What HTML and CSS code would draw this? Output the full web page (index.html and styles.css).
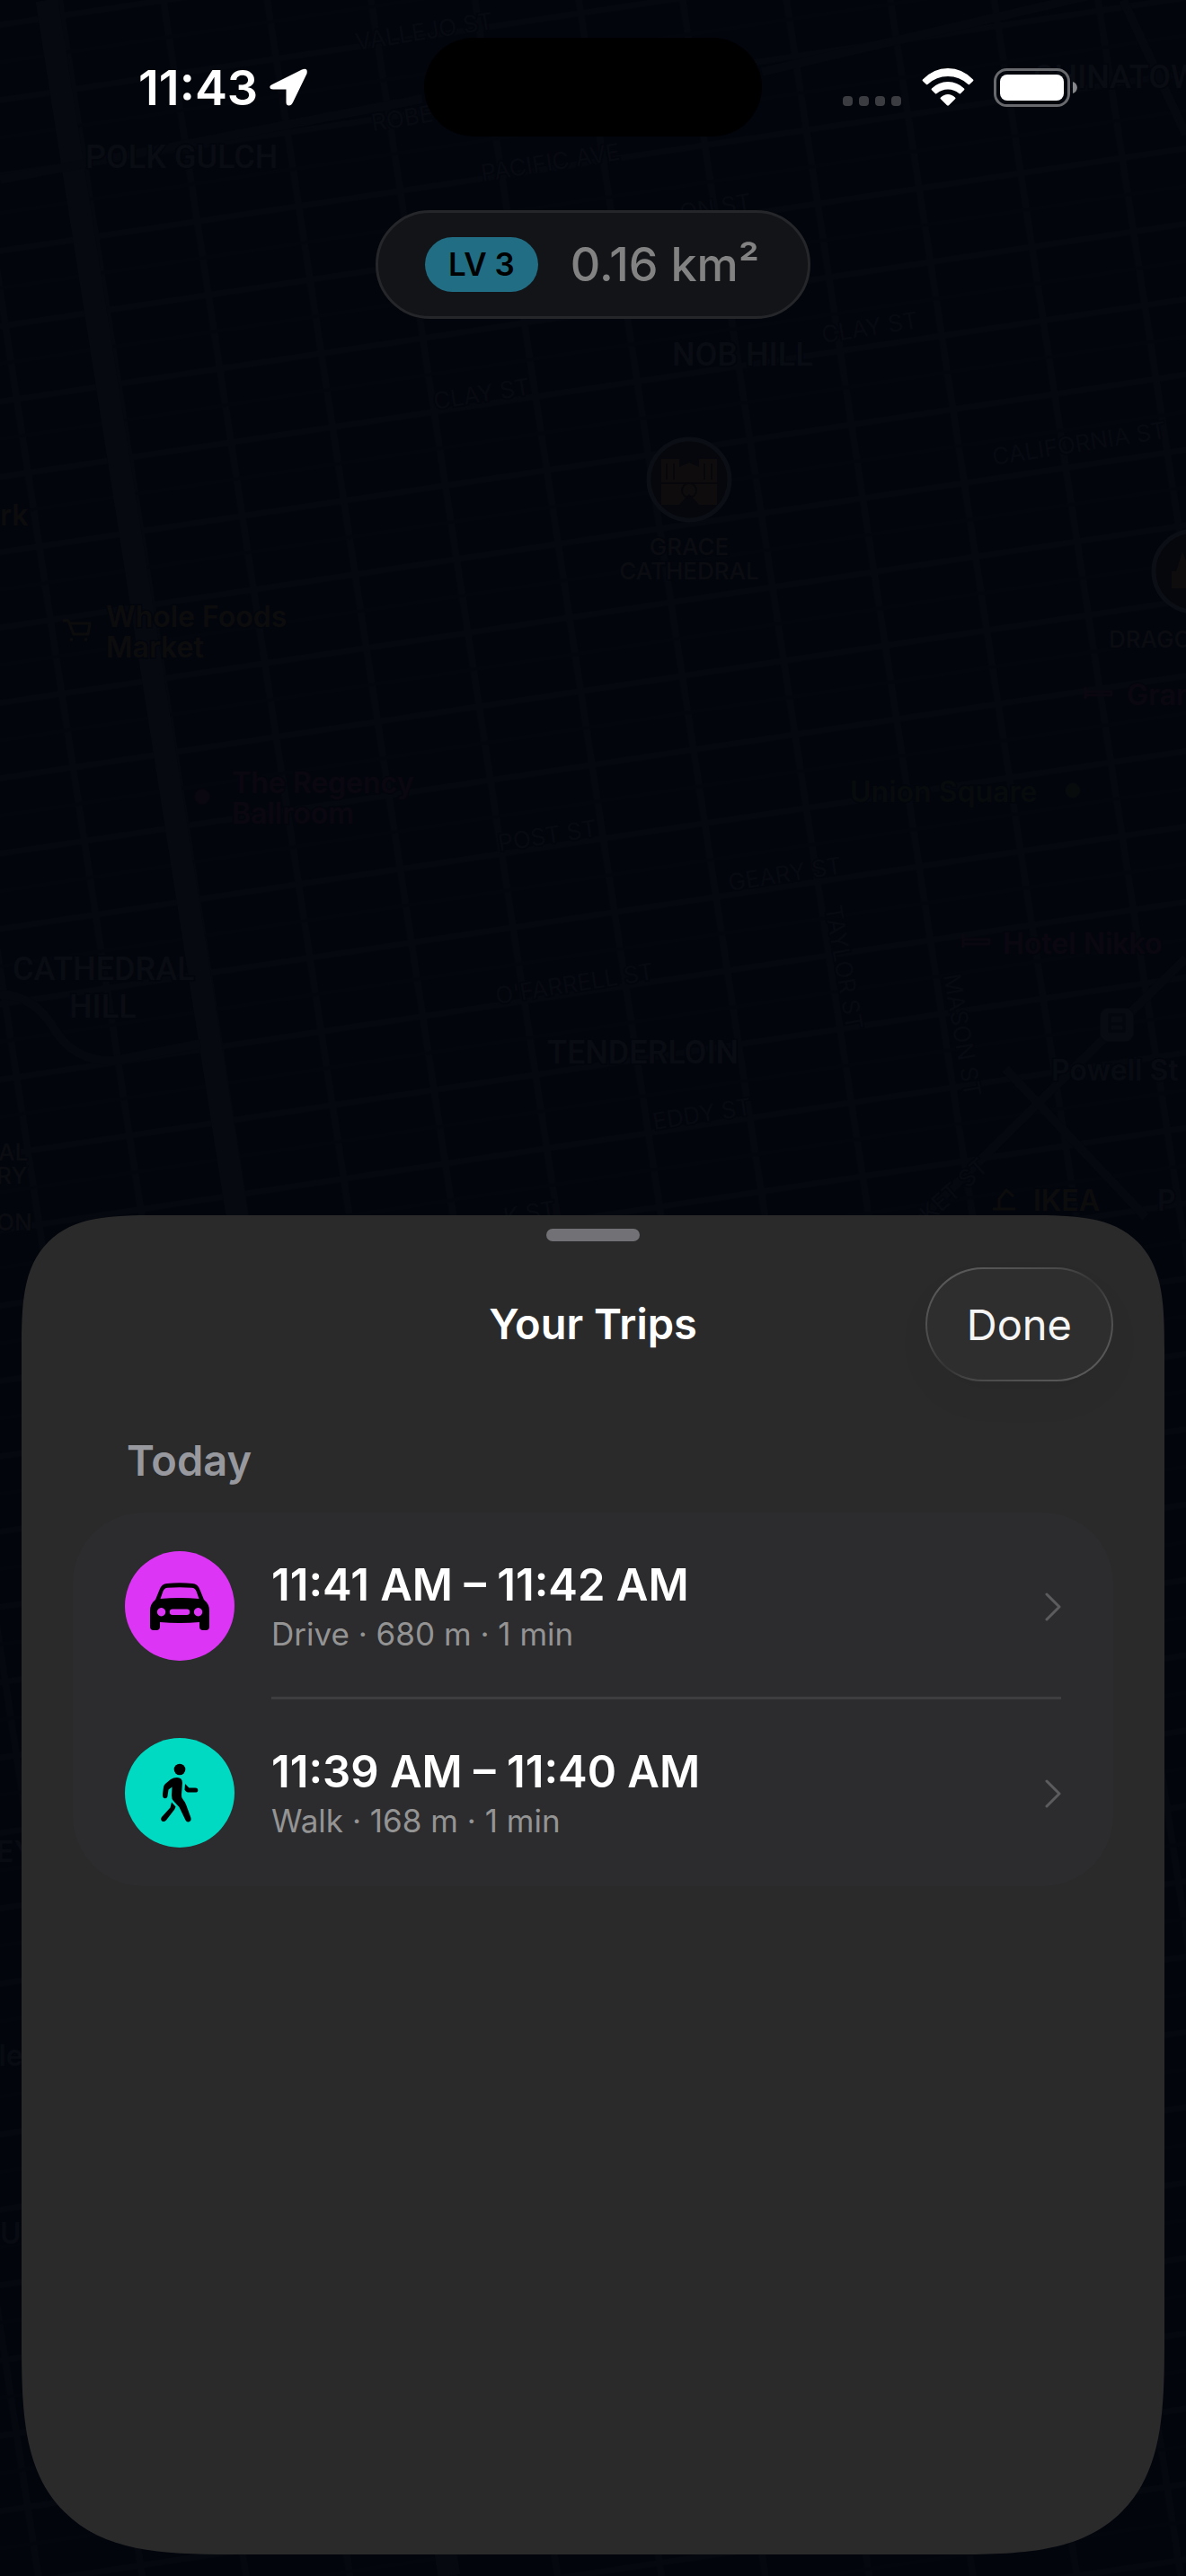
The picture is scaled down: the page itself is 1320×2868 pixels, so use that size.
FILE: index.html
```
<!DOCTYPE html>
<html lang="en">
<head>
    <meta charset="utf-8">
    <meta name="viewport" content="width=device-width, initial-scale=1">
    <title>Your Trips</title>
    <link rel="stylesheet" href="styles.css">
</head>
<body>
    <div class="screen">
        <svg class="map" viewBox="0 0 1320 2868" preserveAspectRatio="xMidYMin slice" aria-hidden="true">
            <defs>
                <pattern id="blocks" width="113" height="82" patternUnits="userSpaceOnUse" patternTransform="matrix(1 -0.15 0.153 1 239 408)">
                    <path class="street" d="M0 3H113M5 0V82"/>
                    <path class="alley" d="M0 44H113"/>
                </pattern>
            </defs>
            <rect width="1320" height="2868" fill="url(#blocks)"/>
            <path class="avenue" d="M52 0L265 1360L500 2868"/>
            <path class="road" d="M0 1107Q38 1108 60 1145T126 1181L223 1162M1022 1360L1182 1202L1320 1067M1119 1190L1275 1355M1250 0L1320 150M0 200L470 110M848 80L1320 -30"/>

            <g class="district">
                <text x="95" y="187">POLK GULCH</text>
                <text x="1150" y="98">CHINATOWN</text>
                <text x="748" y="407">NOB HILL</text>
                <text x="14" y="1091">CATHEDRAL</text>
                <text x="77" y="1133">HILL</text>
                <text x="609" y="1184">TENDERLOIN</text>
            </g>
            <g class="street-name">
                <text transform="translate(397 56) rotate(-9)">VALLEJO ST</text>
                <text transform="translate(415 146) rotate(-9)">ROBERT C</text>
                <text transform="translate(537 202) rotate(-9)">PACIFIC AVE</text>
                <text transform="translate(758 246) rotate(-9)">ON ST</text>
                <text transform="translate(916 382) rotate(-9)">CLAY ST</text>
                <text transform="translate(484 456) rotate(-9)">CLAY ST</text>
                <text transform="translate(1106 518) rotate(-9)">CALIFORNIA ST</text>
                <text transform="translate(556 948) rotate(-9)">POST ST</text>
                <text transform="translate(812 992) rotate(-9)">GEARY ST</text>
                <text transform="translate(553 1118) rotate(-9)">O'FARRELL ST</text>
                <text transform="translate(728 1258) rotate(-9)">EDDY ST</text>
                <text transform="translate(562 1364) rotate(-9)">K ST</text>
                <text transform="translate(918 1010) rotate(80)">TAYLOR ST</text>
                <text transform="translate(1050 1086) rotate(80)">MASON ST</text>
                <text transform="translate(1034 1362) rotate(-42)">KET ST</text>
            </g>
            <g class="landmark">
                <circle cx="767" cy="534" r="45"/>
                <path class="cathedral" d="M736 562V511H756V520L767 515L778 520V511H798V562H778L767 550L756 562Z"/>
                <path class="cathedral-detail" d="M742 516V534M750 516V534M784 516V534M792 516V534M734 538H800"/>
                <circle class="cathedral-detail" cx="767" cy="546" r="8"/>
                <text x="767" y="618" text-anchor="middle">GRACE</text>
                <text x="767" y="645" text-anchor="middle">CATHEDRAL</text>
                <circle cx="1329" cy="636" r="45"/>
                <path class="cathedral" d="M1304 655V636H1309L1316 614L1320 624V655Z"/>
                <text x="1234" y="721">DRAGON'S GATE</text>
                <text x="-2" y="1292">AL</text>
                <text x="-4" y="1318">RY</text>
                <text x="-4" y="1370">ON</text>
            </g>
            <g class="place shop">
                <text x="0" y="585">rk</text>
                <text x="118" y="698">Whole Foods</text>
                <text x="118" y="732">Market</text>
                <text x="1150" y="1348">IKEA</text>
                <path d="M70 691H76L82 706H98L100 694H77M78 712h3M94 712h3"/>
                <path d="M1105 1346H1130M1112 1346V1335L1120 1325L1128 1332"/>
            </g>
            <g class="place venue">
                <text x="258" y="883">The Regency</text>
                <text x="258" y="917">Ballroom</text>
                <circle cx="225" cy="887" r="8"/>
                <text x="1254" y="785">Grant Plaza</text>
                <text x="1116" y="1062">Hotel Nikko</text>
                <path d="M1208 765V778M1208 774H1237V770H1208M1072 1040V1055M1072 1051H1101V1046H1072"/>
            </g>
            <g class="place park">
                <text x="946" y="893">Union Square</text>
                <circle cx="1194" cy="880" r="8"/>
            </g>
            <g class="place transit">
                <text x="1170" y="1203">Powell St</text>
                <rect x="1224" y="1122" width="38" height="38" rx="10"/>
                <path d="M1235 1130H1251V1148H1235ZM1235 1140H1251"/>
                <text x="1288" y="1348">P</text>
                <text x="-4" y="2073">EY</text>
                <text x="-20" y="2300">ale</text>
                <text x="0" y="2498">U</text>
            </g>
        </svg>

        <header class="status-bar">
            <div class="status-left">
                <time>11:43</time>
                <svg class="location" viewBox="0 0 42 42" aria-label="Location in use">
                    <path d="M3 18L36 1.500Q43-1 41.500 6L26 38Q24 42 21 41.500Q18.500 41 18.500 38V23.500H4Q.5 23.500 .3 21Q.2 19 3 18Z"/>
                </svg>
            </div>
            <div class="island"></div>
            <div class="status-right">
                <svg class="signal" viewBox="0 0 66 42" aria-label="No signal">
                    <rect x="0" y="31" width="11" height="11" rx="4"/>
                    <rect x="18" y="31" width="11" height="11" rx="4"/>
                    <rect x="36" y="31" width="11" height="11" rx="4"/>
                    <rect x="54" y="31" width="11" height="11" rx="4"/>
                </svg>
                <svg class="wifi" viewBox="0 0 58 42" aria-label="Wi-Fi">
                    <path d="M1 12.500Q13 0 29 0T57 12.500Q58 13.300 57 14.200L53 18Q52.200 18.600 51.300 17.800Q42 9 29 9T6.700 17.800Q5.800 18.600 5 18L1 14.200Q0 13.300 1 12.500Z"/>
                    <path d="M11 22.500Q18.500 15 29 15T47 22.500Q48 23.300 47 24.200L43 28.200Q42.200 28.800 41.300 28Q36 23.500 29 23.500T16.700 28Q15.800 28.800 15 28.200L11 24.200Q10 23.300 11 22.500Z"/>
                    <path d="M21 32.500Q24.500 29 29 29T37 32.500Q38 33.300 37 34.200L30 41.300Q29 42.200 28 41.300L21 34.200Q20 33.300 21 32.500Z"/>
                </svg>
                <svg class="battery" viewBox="0 0 93 43" aria-label="Battery full">
                    <rect class="battery-shell" x="1.500" y="1.500" width="82" height="40" rx="13"/>
                    <rect class="battery-level" x="7" y="7" width="71" height="29" rx="8"/>
                    <path class="battery-cap" d="M88 15C94.500 17 94.500 26 88 28Z"/>
                </svg>
            </div>
        </header>

        <div class="score">
            <span class="level">LV 3</span>
            <span class="area">0.16 km²</span>
        </div>

        <main class="sheet">
            <div class="grabber"></div>
            <div class="sheet-header">
                <h1>Your Trips</h1>
                <button class="done" type="button">Done</button>
            </div>

            <section class="day">
                <h2>Today</h2>
                <ul class="trips">
                    <li>
                        <a class="trip" href="#drive">
                            <span class="trip-icon drive">
                                <svg viewBox="0 0 122 122" aria-hidden="true">
                                    <path fill-rule="evenodd" d="M34 54L38.500 43Q41 36 47 36Q61 34.500 75 36Q81 36 83.500 43L88 54Q94 59 94 66V84Q94 88 90 88H87Q83 88 83 84V79Q61 81 39 79V84Q39 88 35 88H32Q28 88 28 84V66Q28 59 34 54ZM39.500 53Q61 51 82.500 53L79.500 44.500Q78 41 74.500 40.800Q61 39.500 47.500 40.800Q44 41 42.500 44.500ZM40.500 63a4.700 4.700 0 1 0 .1 0ZM81.500 63a4.700 4.700 0 1 0 .1 0ZM53 64.500a3.200 3.200 0 0 0 0 6.400H69a3.200 3.200 0 0 0 0-6.400Z"/>
                                </svg>
                            </span>
                            <span class="trip-body">
                                <span class="trip-text">
                                    <span class="trip-time">11:41 AM – 11:42 AM</span>
                                    <span class="trip-info">Drive · 680 m · 1 min</span>
                                </span>
                                <svg class="chevron" viewBox="0 0 18 32" aria-hidden="true"><path d="M2 2L16 16L2 30"/></svg>
                            </span>
                        </a>
                    </li>
                    <li>
                        <a class="trip" href="#walk">
                            <span class="trip-icon walk">
                                <svg viewBox="0 0 122 122" aria-hidden="true">
                                    <circle cx="61" cy="35" r="6.300"/>
                                    <path d="M42 62L43 55Q43 53 45 51L51 46Q54 44 58 44Q64 44 64 50L63 63Q62.500 66 65 69Q67 71 68 74L73.300 88.500Q74.500 92 71.500 93.200Q68.800 94 67.500 91.500L60.500 77L54 70Q52 68 52 64L52.500 54.500L48.500 57.500L47.500 64.500Q47.200 67.300 44.700 67.300Q42 67 42 64Z"/>
                                    <path d="M67 51L71.500 55.500H78.500Q81.300 55.700 81.300 58.200Q81.300 60.500 78.500 60.600H70.500Q69 60.600 68 59.500L66.500 57.700Z"/>
                                    <path d="M52 71.500L56.500 76.500Q56 78.500 54.500 80.500L45.800 91.800Q43.500 94 41.300 92.500Q39.200 90.500 41 88L50.500 77.500Z"/>
                                </svg>
                            </span>
                            <span class="trip-body">
                                <span class="trip-text">
                                    <span class="trip-time">11:39 AM – 11:40 AM</span>
                                    <span class="trip-info">Walk · 168 m · 1 min</span>
                                </span>
                                <svg class="chevron" viewBox="0 0 18 32" aria-hidden="true"><path d="M2 2L16 16L2 30"/></svg>
                            </span>
                        </a>
                    </li>
                </ul>
            </section>
        </main>
    </div>
</body>
</html>
```
FILE: styles.css
```
* {
    box-sizing: border-box;
}

body {
    margin: 0;
    background-color: #03050d;
    color: white;
    font-family: Inter, "Liberation Sans", sans-serif;
}

h1, h2, ul {
    margin: 0;
    padding: 0;
}

.screen {
    position: relative;
    display: flex;
    flex-direction: column;
    min-height: 100vh;
    overflow: hidden;
}

/* dimmed map behind everything */
.map {
    position: absolute;
    top: 0;
    left: 0;
    width: 100%;
    height: 100%;
}

.map path, .map circle, .map rect {
    stroke-linejoin: round;
}

.map .street {
    fill: none;
    stroke: #05080f;
    stroke-width: 7;
}

.map .alley {
    fill: none;
    stroke: #04060e;
    stroke-width: 4;
}

.map .avenue {
    fill: none;
    stroke: #060910;
    stroke-width: 25;
}

.map .road {
    fill: none;
    stroke: #05080f;
    stroke-width: 10;
}

.map text {
    paint-order: stroke;
    stroke: #03050d;
    stroke-width: 3px;
}

.district {
    fill: #090c12;
    font: 500 36px Roboto, "Liberation Sans", sans-serif;
}

.street-name {
    fill: #070a11;
    font-size: 26px;
}

.landmark {
    fill: #0a0c11;
    font-size: 26px;
    font-weight: 500;
}

.landmark circle {
    fill: #06070c;
    stroke: #0b0e14;
    stroke-width: 5;
}

.landmark .cathedral {
    fill: #0e0c0d;
}

.landmark .cathedral-detail {
    fill: none;
    stroke: #07070b;
    stroke-width: 2;
}

.place {
    font-size: 32px;
    font-weight: 600;
}

.place path {
    fill: none;
    stroke-width: 3;
}

.shop {
    fill: #0c0c0d;
    stroke: #0c0c0d;
}

.venue {
    fill: #0b0710;
    stroke: #0b0710;
}

.park {
    fill: #070b0c;
    stroke: #070b0c;
}

.transit {
    fill: #080b12;
    stroke: #05070e;
}

/* status bar */
.status-bar {
    position: relative;
    display: grid;
    grid-template-columns: 1fr auto 1fr;
    align-items: center;
    padding-top: 42px;
}

.status-left {
    display: flex;
    align-items: center;
    gap: 13px;
    padding-left: 154px;
    font-size: 54px;
    font-weight: 600;
}

.location {
    width: 42px;
    height: 42px;
    fill: white;
}

.island {
    width: 376px;
    height: 110px;
    border-radius: 55px;
    background-color: black;
}

.status-right {
    display: flex;
    align-items: center;
    justify-content: flex-end;
    gap: 22px;
    padding-right: 121px;
}

.signal {
    width: 66px;
    height: 42px;
    fill: #3b3c41;
}

.wifi {
    width: 58px;
    height: 42px;
    fill: white;
}

.battery {
    width: 93px;
    height: 43px;
}

.battery-shell {
    fill: none;
    stroke: #67696d;
    stroke-width: 3;
}

.battery-level {
    fill: white;
}

.battery-cap {
    fill: #85868a;
}

/* level pill */
.score {
    position: relative;
    align-self: center;
    display: flex;
    align-items: center;
    gap: 36px;
    margin-top: 82px;
    padding: 27px 54px 27px 52px;
    border: 3px solid #252629;
    border-radius: 61px;
    background-color: #131418;
}

.level {
    padding: 0 26px;
    border-radius: 31px;
    background-color: #216e84;
    color: black;
    font-size: 35px;
    font-weight: 600;
    line-height: 61px;
}

.area {
    color: #828282;
    font-size: 52px;
    font-weight: 500;
    line-height: 60px;
}

/* bottom sheet */
.sheet {
    position: relative;
    height: 52vh;
    margin: auto 24px 24px;
    padding: 15px 57px 57px;
    border-radius: 106px 106px 165px 165px;
    background-color: #2a2a2a;
}

.grabber {
    width: 104px;
    height: 14px;
    margin: 0 auto;
    border-radius: 7px;
    background-color: #727176;
}

.sheet-header {
    display: grid;
    grid-template-columns: 1fr auto 1fr;
    align-items: center;
    margin-top: 29px;
}

.sheet-header h1 {
    grid-column: 2;
    font-size: 47px;
    font-weight: 600;
    line-height: 60px;
}

.done {
    justify-self: end;
    height: 127px;
    padding: 0 44px;
    border: 2px solid transparent;
    border-radius: 64px;
    background: linear-gradient(#2e2e2e, #2e2e2e) padding-box, linear-gradient(150deg, #606060, #4a4a4a 35%, #343434 50%, #4a4a4a 65%, #606060) border-box;
    box-shadow: 0 20px 40px rgba(0, 0, 0, 0.04);
    color: #f5f5f5;
    font: 400 47px Inter, "Liberation Sans", sans-serif;
}

.day {
    margin-top: 58px;
}

.day h2 {
    padding-left: 60px;
    color: #98989f;
    font-size: 47px;
    font-weight: 600;
    line-height: 60px;
}

.trips {
    margin-top: 28px;
    border-radius: 78px;
    background-color: #2c2c2e;
    list-style: none;
}

.trip {
    display: flex;
    align-items: center;
    gap: 41px;
    padding: 0 58px;
    color: white;
    text-decoration: none;
}

.trip-icon {
    width: 122px;
    height: 122px;
    border-radius: 50%;
}

.trip-icon svg {
    display: block;
}

.drive {
    background-color: #dc35f5;
}

.walk {
    background-color: #00dac3;
}

.trip-body {
    flex: 1;
    display: flex;
    align-items: center;
    justify-content: space-between;
    height: 208px;
    padding-top: 6px;
    border-bottom: 3px solid #3e3e40;
}

.trips li:last-child .trip-body {
    border-bottom-color: transparent;
}

.trip-text {
    display: flex;
    flex-direction: column;
}

.trip-time {
    font-size: 49px;
    font-weight: 600;
    line-height: 60px;
}

.trip-info {
    color: #949495;
    font-size: 35px;
    line-height: 48px;
}

.chevron {
    width: 18px;
    height: 32px;
    fill: none;
    stroke: #5c5c5f;
    stroke-width: 3;
    stroke-linecap: round;
    stroke-linejoin: round;
}

/* smoother corners where the browser can draw them */
@supports (corner-shape: squircle) {
    .sheet {
        border-radius: 150px 150px 240px 240px;
        corner-shape: superellipse(1.65);
    }
}
```
